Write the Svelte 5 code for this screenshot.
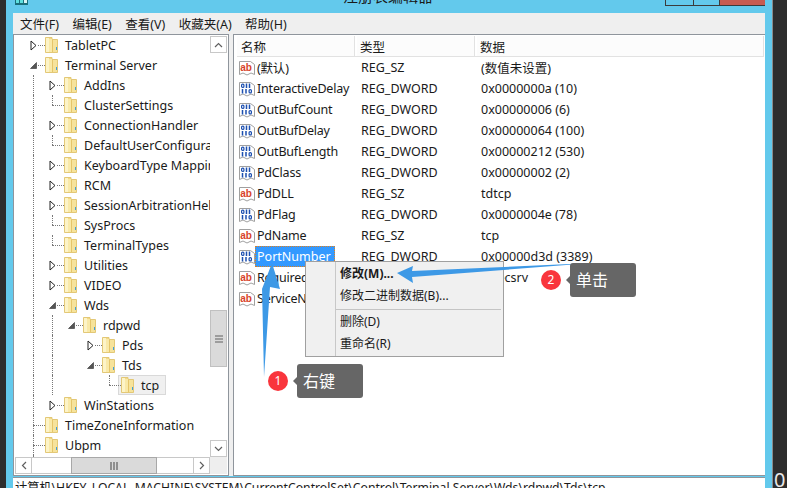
<script>
  const treeRows = [
    { name: 'TabletPC', depth: 0, exp: 'closed', guides: [] },
    { name: 'Terminal Server', depth: 0, exp: 'open', guides: [] },
    { name: 'AddIns', depth: 1, exp: 'closed', guides: [true] },
    { name: 'ClusterSettings', depth: 1, exp: 'none', guides: [true] },
    { name: 'ConnectionHandler', depth: 1, exp: 'closed', guides: [true] },
    { name: 'DefaultUserConfiguration', depth: 1, exp: 'none', guides: [true] },
    { name: 'KeyboardType Mapping', depth: 1, exp: 'closed', guides: [true] },
    { name: 'RCM', depth: 1, exp: 'closed', guides: [true] },
    { name: 'SessionArbitrationHelper', depth: 1, exp: 'closed', guides: [true] },
    { name: 'SysProcs', depth: 1, exp: 'none', guides: [true] },
    { name: 'TerminalTypes', depth: 1, exp: 'none', guides: [true] },
    { name: 'Utilities', depth: 1, exp: 'closed', guides: [true] },
    { name: 'VIDEO', depth: 1, exp: 'closed', guides: [true] },
    { name: 'Wds', depth: 1, exp: 'open', guides: [true] },
    { name: 'rdpwd', depth: 2, exp: 'open', guides: [true, true] },
    { name: 'Pds', depth: 3, exp: 'closed', guides: [true, true, false] },
    { name: 'Tds', depth: 3, exp: 'open', guides: [true, true, false] },
    { name: 'tcp', depth: 4, exp: 'none', guides: [true, true, false, false], current: true },
    { name: 'WinStations', depth: 1, exp: 'closed', guides: [true] },
    { name: 'TimeZoneInformation', depth: 0, exp: 'none', guides: [] },
    { name: 'Ubpm', depth: 0, exp: 'none', guides: [] },
    { name: '', depth: 0, exp: 'none', guides: [] }
  ]

  const values = [
    { name: '(默认)', kind: 'sz', type: 'REG_SZ', data: '(数值未设置)' },
    { name: 'InteractiveDelay', kind: 'bin', type: 'REG_DWORD', data: '0x0000000a (10)' },
    { name: 'OutBufCount', kind: 'bin', type: 'REG_DWORD', data: '0x00000006 (6)' },
    { name: 'OutBufDelay', kind: 'bin', type: 'REG_DWORD', data: '0x00000064 (100)' },
    { name: 'OutBufLength', kind: 'bin', type: 'REG_DWORD', data: '0x00000212 (530)' },
    { name: 'PdClass', kind: 'bin', type: 'REG_DWORD', data: '0x00000002 (2)' },
    { name: 'PdDLL', kind: 'sz', type: 'REG_SZ', data: 'tdtcp' },
    { name: 'PdFlag', kind: 'bin', type: 'REG_DWORD', data: '0x0000004e (78)' },
    { name: 'PdName', kind: 'sz', type: 'REG_SZ', data: 'tcp' },
    { name: 'PortNumber', kind: 'bin', type: 'REG_DWORD', data: '0x00000d3d (3389)', selected: true },
    { name: 'RequiredPds', kind: 'sz', type: 'REG_MULTI_SZ', data: 'tssecsrv' },
    { name: 'ServiceName', kind: 'sz', type: 'REG_SZ', data: 'tcp' }
  ]
</script>

<div class="screen">
  <div class="edge"></div>
  <div class="frame">
    <div class="titlebar">
      <svg class="appicon" width="13" height="5" viewBox="0 0 13 5">
        <rect width="13" height="5" fill="#1b6f7c" />
        <rect x="1" y="0" width="3" height="3" fill="#5fe0e0" />
        <rect x="5" y="0" width="3" height="3" fill="#5fe0e0" />
        <rect x="9" y="0" width="3" height="3" fill="#d8f4f4" />
      </svg>
      <span class="title">注册表编辑器</span>
      <div class="caption">
        <span class="cap min"></span>
        <span class="cap max"></span>
        <span class="cap close"></span>
      </div>
    </div>

    <div class="menubar">
      <span>文件(F)</span>
      <span>编辑(E)</span>
      <span>查看(V)</span>
      <span>收藏夹(A)</span>
      <span>帮助(H)</span>
    </div>

    <div class="panes">
      <div class="treepane">
        <div class="treebody">
          <div class="tree">
            {#each treeRows as row}
              <div class="treerow">
                {#each row.guides as g}
                  <span class="slot" class:guide={g}></span>
                {/each}
                <span class="slot expander" class:root={row.depth === 0} class:nochild={row.exp === 'none'}>
                  {#if row.exp === 'closed'}
                    <svg class="tri" width="7" height="11" viewBox="0 0 7 11">
                      <path d="M1 1 L1 10 L6 5.5 Z" fill="#fff" stroke="#222" />
                    </svg>
                  {:else if row.exp === 'open'}
                    <svg class="tri" width="7" height="7" viewBox="0 0 7 7">
                      <path d="M6.5 0.5 L6.5 6.5 L0.5 6.5 Z" fill="#555" stroke="#333" stroke-width="0.6" />
                    </svg>
                  {/if}
                </span>
                <span class="treelabel" class:current={row.current}>
                  <svg class="folder" width="13" height="16" viewBox="0 0 13 16">
                    <path d="M0.5 0.5 H7 V2.5 H12.5 V15.5 H0.5 Z" fill="#f3d986" stroke="#e3c877" />
                    <rect x="1" y="1" width="3" height="14" fill="#fdf4c8" />
                    <rect x="4" y="2" width="3" height="13" fill="#f9e9a8" />
                    <rect x="7" y="3" width="1" height="12" fill="#e5c56a" />
                    <rect x="8" y="3" width="4" height="12" fill="#f6e39b" />
                    <rect x="11" y="10" width="1" height="3" fill="#3f9fdc" />
                  </svg>
                  {#if row.name}<span class="treename">{row.name}</span>{/if}
                </span>
              </div>
            {/each}
          </div>
          <div class="vscroll">
            <span class="sbtn">
              <svg width="9" height="6" viewBox="0 0 9 6"><path d="M1 5 L4.5 1.5 L8 5" fill="none" stroke="#606060" stroke-width="1.2" /></svg>
            </span>
            <span class="vtrack"></span>
            <span class="vthumb">
              <svg width="8" height="8" viewBox="0 0 8 8"><path d="M0 1 H8 M0 4 H8 M0 7 H8" stroke="#606060" stroke-width="1.2" /></svg>
            </span>
            <span class="vtrack short"></span>
            <span class="sbtn">
              <svg width="9" height="6" viewBox="0 0 9 6"><path d="M1 1 L4.5 4.5 L8 1" fill="none" stroke="#606060" stroke-width="1.2" /></svg>
            </span>
          </div>
        </div>
        <div class="hscrollrow">
          <div class="hscroll">
            <span class="sbtn h">
              <svg width="6" height="9" viewBox="0 0 6 9"><path d="M5 1 L1.5 4.5 L5 8" fill="none" stroke="#606060" stroke-width="1.2" /></svg>
            </span>
            <span class="htrack left"></span>
            <span class="hthumb">
              <svg width="8" height="8" viewBox="0 0 8 8"><path d="M1 0 V8 M4 0 V8 M7 0 V8" stroke="#606060" stroke-width="1.2" /></svg>
            </span>
            <span class="htrack right"></span>
            <span class="sbtn h">
              <svg width="6" height="9" viewBox="0 0 6 9"><path d="M1 1 L4.5 4.5 L1 8" fill="none" stroke="#606060" stroke-width="1.2" /></svg>
            </span>
          </div>
          <div class="corner"></div>
        </div>
      </div>

      <div class="listpane">
        <div class="listhead">
          <span class="hcell c1">名称</span>
          <span class="hcell c2">类型</span>
          <span class="hcell c3">数据</span>
        </div>
        {#each values as v}
          <div class="listrow">
            <span class="c1 namecell">
              {#if v.kind === 'sz'}
                <svg class="regicon" width="16" height="16" viewBox="0 0 16 16">
                  <path d="M0.5 1.5 H11.5 L15.5 4.5 V14.5 L12 13 L8 15 L4 13 L0.5 14.5 Z" fill="#fff" stroke="#a0a0a0" />
                  <text x="1.2" y="10.5" class="abtext">ab</text>
                </svg>
              {:else}
                <svg class="regicon" width="16" height="16" viewBox="0 0 16 16">
                  <path d="M0.5 1.5 H11.5 L15.5 4.5 V14.5 L12 13 L8 15 L4 13 L0.5 14.5 Z" fill="#fff" stroke="#a0a0a0" />
                  <g fill="none" stroke="#1c4fb0" stroke-width="1.2">
                    <rect x="2.6" y="3.1" width="2.3" height="3.3" rx="1" />
                    <rect x="10.1" y="8.6" width="2.3" height="3.3" rx="1" />
                  </g>
                  <path d="M7.5 2.5 V7 M10.5 2.5 V7 M3.5 8 V12.5 M7 8 V12.5" stroke="#1c4fb0" stroke-width="1.5" />
                </svg>
              {/if}
              <span class="valname" class:selected={v.selected}>{v.name}</span>
            </span>
            <span class="c2 cell">{v.type}</span>
            <span class="c3 cell">{v.data}</span>
          </div>
        {/each}
      </div>
    </div>

    <div class="statusbar">
      <span>计算机\HKEY_LOCAL_MACHINE\SYSTEM\CurrentControlSet\Control\Terminal Server\Wds\rdpwd\Tds\tcp</span>
    </div>
  </div>
  <div class="edge right"><span class="stray">0</span></div>

  <div class="contextmenu">
    <div class="mi strong">修改(M)...</div>
    <div class="mi">修改二进制数据(B)...</div>
    <div class="msep"></div>
    <div class="mi">删除(D)</div>
    <div class="mi">重命名(R)</div>
  </div>

  <svg class="arrows" width="787" height="488" viewBox="0 0 787 488">
    <path d="M272 263 L280 289 L270 287 L264 377 L262 287 L262 289 Z" fill="#3d99e6" />
    <path d="M397 273 L413 266 L412 271 L592 263 L412 277 L413 283 Z" fill="#3d99e6" />
  </svg>

  <span class="badge one">1</span>
  <div class="tip one">右键</div>
  <span class="badge two">2</span>
  <div class="tip two">单击</div>
</div>

<style>
  :global(body) {
    margin: 0;
    background: #2d2d2d;
  }

  .screen {
    position: relative;
    width: 787px;
    height: 488px;
    overflow: hidden;
    display: flex;
    background: #2d2d2d;
    font-family: "Noto Sans", "Noto Sans CJK SC", sans-serif;
    font-size: 12px;
    color: #1a1a1a;
  }

  .edge {
    width: 6px;
    flex: none;
  }

  .edge.right {
    width: 15px;
    position: relative;
  }

  .stray {
    position: absolute;
    left: 2px;
    bottom: -4px;
    font-size: 20px;
    line-height: 24px;
    color: #e8e8e8;
  }

  .frame {
    flex: 1;
    display: flex;
    flex-direction: column;
    background: #63c9ec;
    padding: 0 7px;
    border-right: 1px solid #8a8a8a;
    margin-right: -1px;
    min-width: 0;
  }

  .titlebar {
    height: 13px;
    flex: none;
    position: relative;
    display: flex;
    justify-content: center;
    align-items: flex-end;
    overflow: hidden;
  }

  .appicon {
    position: absolute;
    left: 2px;
    top: 0;
  }

  .title {
    font-size: 15px;
    line-height: 20px;
    padding-bottom: 7px;
    padding-right: 2px;
    color: #1a1a1a;
    white-space: nowrap;
  }

  .caption {
    position: absolute;
    right: -1px;
    top: -1px;
    display: flex;
    height: 5px;
    border: 1px solid #3b3b3b;
  }

  .cap {
    display: block;
  }

  .cap.min {
    width: 27px;
    border-right: 1px solid #3b3b3b;
  }

  .cap.max {
    width: 25px;
    border-right: 1px solid #3b3b3b;
  }

  .cap.close {
    width: 45px;
    background: #c75b50;
  }

  .menubar {
    height: 21px;
    flex: none;
    display: flex;
    align-items: center;
    gap: 13.4px;
    padding-left: 7px;
    background: #efefef;
    font-size: 12.5px;
  }

  .panes {
    flex: 1;
    min-height: 0;
    display: flex;
    gap: 4px;
    background: #efefef;
  }

  .treepane {
    width: 216px;
    flex: none;
    box-sizing: border-box;
    display: flex;
    flex-direction: column;
    background: #fff;
    border: 1px solid #8f959c;
    padding: 1px;
  }

  .treebody {
    flex: 1;
    min-height: 0;
    display: flex;
  }

  .tree {
    flex: 1;
    min-width: 0;
    overflow: hidden;
    padding-left: 9px;
  }

  .treerow {
    height: 20px;
    display: flex;
    align-items: center;
    font-size: 12.5px;
    white-space: nowrap;
  }

  .treerow:first-child {
    margin-top: -1px;
  }

  .slot {
    width: 19px;
    height: 20px;
    flex: none;
    display: block;
    position: relative;
    box-sizing: border-box;
  }

  .slot.guide::before {
    content: "";
    position: absolute;
    left: 9px;
    top: 0;
    bottom: 0;
    border-left: 1px dotted #777;
  }

  .expander {
    display: flex;
    align-items: center;
    justify-content: center;
  }

  .expander::after {
    content: "";
    position: absolute;
    left: 9px;
    right: -2px;
    top: 10px;
    border-top: 1px dotted #777;
  }

  .expander.root.nochild::before {
    content: "";
    position: absolute;
    left: 9px;
    top: 0;
    bottom: 0;
    border-left: 1px dotted #777;
  }

  .expander.nochild:not(.root)::before {
    content: "";
    position: absolute;
    left: 9px;
    top: 0;
    height: 10px;
    border-left: 1px dotted #777;
  }

  .tri {
    position: relative;
    z-index: 1;
    background: #fff;
  }

  .treelabel {
    display: flex;
    align-items: center;
    gap: 7px;
    height: 20px;
    margin-left: 2px;
    box-sizing: border-box;
  }

  .treelabel.current {
    background: #f0f0f0;
    border: 1px solid #d9d9d9;
    margin-left: -1px;
    padding: 0 6px 0 2px;
  }

  .folder {
    flex: none;
  }

  .vscroll {
    width: 17px;
    flex: none;
    display: flex;
    flex-direction: column;
    background: #fff;
  }

  .sbtn {
    height: 17px;
    flex: none;
    box-sizing: border-box;
    border: 1px solid #c8c8c8;
    display: flex;
    align-items: center;
    justify-content: center;
    background: #fff;
  }

  .sbtn.h {
    width: 17px;
    height: 100%;
  }

  .vtrack {
    flex: 259;
    display: block;
  }

  .vtrack.short {
    flex: 73;
  }

  .vthumb {
    height: 57px;
    flex: none;
    background: #dadada;
    border: 1px solid #c0c0c0;
    box-sizing: border-box;
    display: flex;
    align-items: center;
    justify-content: center;
  }

  .hscrollrow {
    height: 17px;
    flex: none;
    display: flex;
  }

  .hscroll {
    flex: 1;
    display: flex;
    min-width: 0;
  }

  .htrack {
    display: block;
    border-top: 1px solid #c8c8c8;
    border-bottom: 1px solid #c8c8c8;
    box-sizing: border-box;
  }

  .htrack.left {
    width: 39px;
  }

  .htrack.right {
    flex: 1;
  }

  .hthumb {
    width: 86px;
    flex: none;
    background: #dadada;
    border: 1px solid #a8a8a8;
    box-sizing: border-box;
    display: flex;
    align-items: center;
    justify-content: center;
  }

  .corner {
    width: 17px;
    flex: none;
    background: #eeeeee;
  }

  .listpane {
    flex: 1;
    min-width: 0;
    box-sizing: border-box;
    background: #fff;
    border: 1px solid #8f959c;
    border-right: none;
    overflow: hidden;
  }

  .listhead {
    height: 21px;
    box-sizing: border-box;
    margin: 1px 1px 0 3px;
    display: flex;
    gap: 2px;
    background: #fff;
    border-bottom: 1px solid #e2e2e2;
  }

  .hcell {
    box-sizing: border-box;
    height: 20px;
    display: flex;
    align-items: center;
    padding-left: 4px;
    background: #fcfcfc;
    border-right: 1px solid #e2e2e2;
    font-size: 12.5px;
  }

  .hcell.c2,
  .hcell.c3 {
    padding-left: 3px;
  }

  .c1 {
    width: 118px;
    flex: none;
  }

  .c2 {
    width: 118px;
    flex: none;
  }

  .c3 {
    flex: 1;
    min-width: 0;
  }

  .listrow {
    height: 21px;
    margin-left: 2px;
    display: flex;
    gap: 2px;
    align-items: center;
    font-size: 12.5px;
    white-space: nowrap;
  }

  .namecell {
    display: flex;
    align-items: center;
    gap: 2px;
    padding-left: 3px;
    box-sizing: border-box;
    overflow: hidden;
  }

  .regicon {
    flex: none;
  }

  .abtext {
    font-family: "Liberation Sans", sans-serif;
    font-size: 10px;
    font-weight: 700;
    fill: #d8432a;
  }

  .valname {
    height: 21px;
    display: flex;
    align-items: center;
    padding: 0 2px;
    box-sizing: border-box;
    margin-left: -2px;
    letter-spacing: -0.2px;
  }

  .valname.selected {
    background: #3399ff;
    color: #fff;
    outline: 1px dotted #e0801c;
    outline-offset: -1px;
    padding: 0 4px 0 2px;
    letter-spacing: 0;
  }

  .cell {
    padding-left: 5px;
    box-sizing: border-box;
  }

  .statusbar {
    height: 11px;
    flex: none;
    box-sizing: border-box;
    margin-top: 1px;
    background: #fff;
    border-top: 1px solid #8f959c;
    overflow: hidden;
    padding: 2px 0 0 2px;
    font-size: 12.2px;
    line-height: 16px;
    white-space: nowrap;
  }

  .contextmenu {
    position: absolute;
    left: 305px;
    top: 261px;
    width: 199px;
    height: 96px;
    box-sizing: border-box;
    padding-top: 1px;
    background: linear-gradient(to right, #f0f0f0 29px, #c8c8c8 29px, #c8c8c8 30px, #f0f0f0 30px);
    border: 1px solid #a0a0a0;
    font-size: 12px;
  }

  .mi {
    height: 22px;
    line-height: 22px;
    padding-left: 34px;
    white-space: nowrap;
  }

  .mi.strong {
    font-weight: 700;
  }

  .msep {
    height: 1px;
    margin: 2px 2px 1px 30px;
    background: #c4c4c4;
  }

  .arrows {
    position: absolute;
    left: 0;
    top: 0;
    pointer-events: none;
  }

  .badge {
    position: absolute;
    width: 20px;
    height: 20px;
    border-radius: 50%;
    background: #f9353c;
    color: #fff;
    font-size: 12px;
    line-height: 20px;
    text-align: center;
  }

  .badge.one {
    left: 268px;
    top: 371px;
  }

  .badge.two {
    left: 541px;
    top: 270px;
  }

  .tip {
    position: absolute;
    width: 66px;
    height: 34px;
    box-sizing: border-box;
    padding-left: 6px;
    border-radius: 3px;
    background: #666;
    color: #fff;
    font-size: 16px;
    line-height: 34px;
  }

  .tip::before {
    content: "";
    position: absolute;
    left: -4px;
    top: 13px;
    border-top: 4px solid transparent;
    border-bottom: 4px solid transparent;
    border-right: 4px solid #666;
  }

  .tip.one {
    left: 297px;
    top: 364px;
  }

  .tip.two {
    left: 570px;
    top: 263px;
  }
</style>
